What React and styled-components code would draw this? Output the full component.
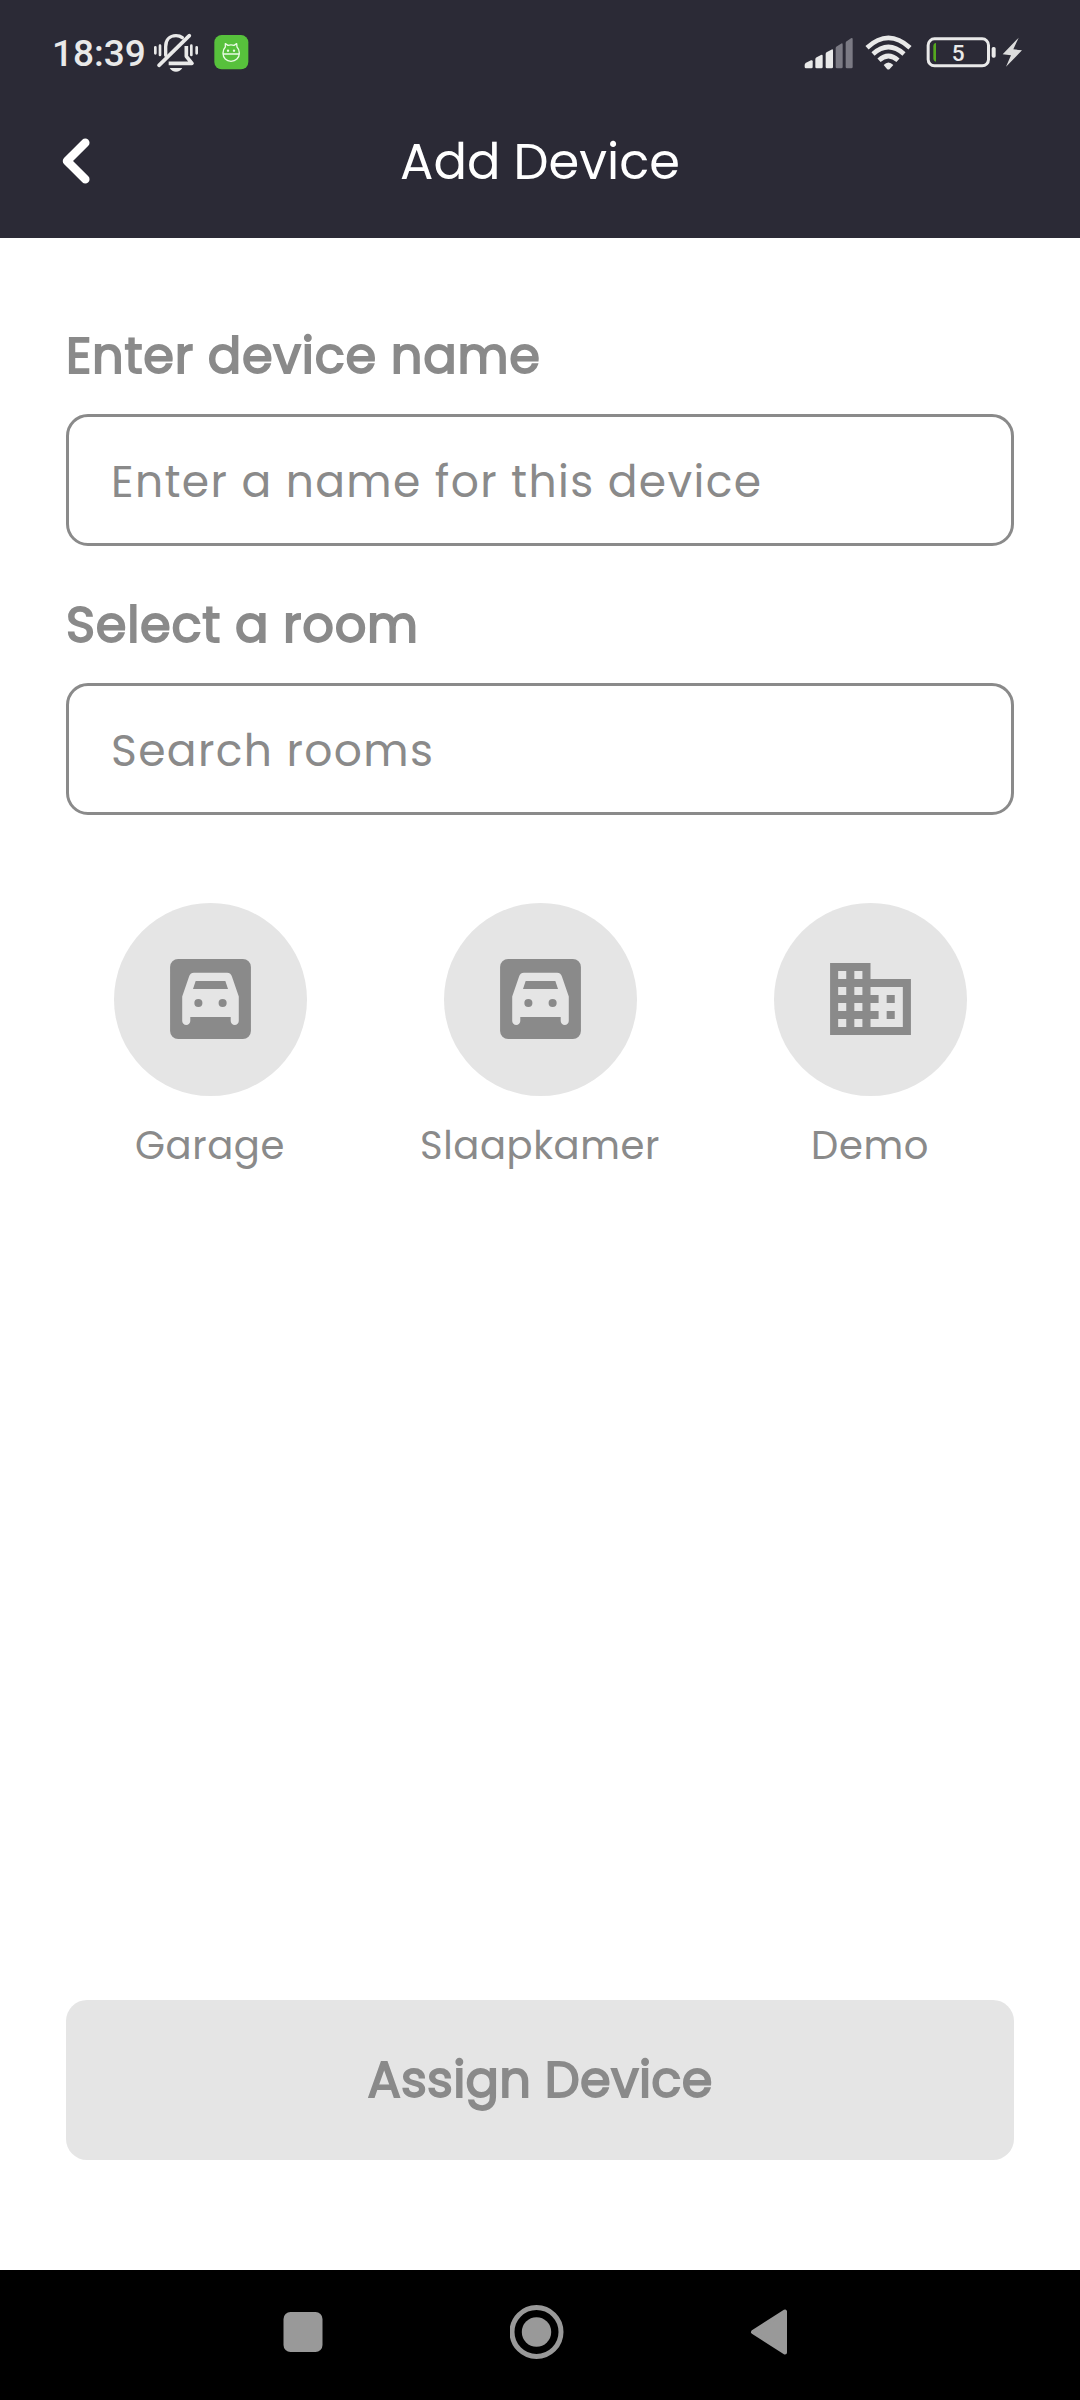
import React from "react";
import styled, { createGlobalStyle } from "styled-components";

const GlobalStyle = createGlobalStyle`
  *, *::before, *::after { box-sizing: border-box; }
  body { margin: 0; background: #fff; }
`;

const Screen = styled.div`
  display: flex;
  flex-direction: column;
  width: 1080px;
  height: 2400px;
  overflow: hidden;
  background: #fff;
  color: #8a8a8a;
  font-family: Poppins, Inter, "Open Sans", sans-serif;
  font-feature-settings: "cv11" 1;
`;

const StatusBar = styled.div`
  display: flex;
  align-items: flex-start;
  justify-content: space-between;
  height: 84px;
  padding: 32px 56px 0 52px;
  background: #2b2a36;
  color: #e9e9e9;
  font-family: Roboto, sans-serif;
`;

const StatusGroup = styled.div`
  display: flex;
  align-items: flex-start;
`;

const Clock = styled.span`
  width: 100px;
  font-size: 37px;
  font-weight: 500;
  line-height: 43px;
  white-space: nowrap;
`;

const AppBadge = styled.svg`
  margin-left: 14px;
`;

const StatusSymbols = styled.svg`
  margin-top: 3px;
`;

const AppBar = styled.header`
  display: grid;
  grid-template-columns: 120px 1fr 120px;
  align-items: center;
  height: 154px;
  background: #2b2a36;
  color: #fff;
`;

const BackButton = styled.button`
  display: flex;
  justify-self: start;
  padding: 0;
  margin-left: 60px;
  border: 0;
  background: none;
  color: inherit;
`;

const Title = styled.h1`
  margin: 0;
  padding-top: 1px;
  text-align: center;
  font-size: 49.5px;
  font-weight: 400;
  line-height: 60px;
`;

const Form = styled.main`
  display: flex;
  flex-direction: column;
  flex: 1;
  padding: 88px 66px 110px;
`;

const Label = styled.h2`
  margin: 0 0 28px;
  font-size: 49.5px;
  font-weight: 400;
  line-height: 60px;
  white-space: nowrap;
  letter-spacing: 0.72px;
  -webkit-text-stroke: 1.8px #8a8a8a;
`;

const Field = styled.div`
  display: flex;
  align-items: center;
  height: 132px;
  margin-bottom: 49px;
  padding: 4px 42px 0;
  border: 3px solid #8a8a8a;
  border-radius: 22px;
`;

const Placeholder = styled.span`
  font-size: 44px;
  line-height: 56px;
  white-space: nowrap;
  letter-spacing: 1.375px;
`;

const Rooms = styled.div`
  display: grid;
  grid-template-columns: repeat(3, 330px);
  justify-content: center;
  margin-top: 39px;
`;

const Room = styled.div`
  display: flex;
  flex-direction: column;
  align-items: center;
`;

const RoomIcon = styled.div`
  display: grid;
  justify-content: center;
  width: 193px;
  height: 193px;
  padding-top: 48px;
  border-radius: 50%;
  background: #e5e5e5;
`;

const RoomName = styled.span`
  margin-top: 25px;
  font-size: 38.5px;
  line-height: 50px;
  letter-spacing: 0.6px;
`;

const AssignButton = styled.button`
  display: flex;
  align-items: center;
  justify-content: center;
  height: 160px;
  margin-top: auto;
  padding: 0;
  border: 0;
  border-radius: 21px;
  background: #e5e5e5;
  color: #8a8a8a;
  font-family: inherit;
  font-feature-settings: inherit;
  font-size: 49.5px;
  font-weight: 400;
  line-height: 60px;
  letter-spacing: 0.25px;
  -webkit-text-stroke: 1.8px #8a8a8a;
`;

const NavBar = styled.nav`
  display: flex;
  align-items: center;
  justify-content: space-between;
  height: 130px;
  padding: 0 292px 6px 283px;
  background: #000;
`;

const BellMuted = () => (
  <svg width="48" height="42" viewBox="336 36 144 126" fill="none" stroke="#e9e9e9">
    <g strokeWidth="10" strokeLinecap="round">
      <path d="M346 82v18M360 77v28M454 77v28M470 82v18" strokeWidth="8" />
      <path d="M357 136L448 47" strokeWidth="11" />
      <path d="M377 106V80c0-20 12-33 31-33 8 0 14 2 19 6" />
    </g>
    <path d="M439 78v31l17 21h-70" strokeWidth="11" strokeLinejoin="round" />
    <path d="M389 144h38c-4 7-11 11-19 11s-15-4-19-11z" fill="#e9e9e9" stroke="none" />
  </svg>
);

const Badge = () => (
  <AppBadge width="35" height="38" viewBox="521 36 105 114" fill="none">
    <rect x="522" y="45" width="102" height="103" rx="22" fill="#57c13c" />
    <g stroke="#e9fbe4" strokeWidth="4" strokeLinejoin="round" strokeLinecap="round">
      <path d="M555 81c-5 5-7 11-7 18 0 15 10 25 24 25s25-10 25-25c0-7-2-13-7-18l-1-10-8 5c-6-2-12-2-18 0l-8-5z" />
      <path d="M549 102h47" />
    </g>
    <circle cx="563" cy="92" r="3.5" fill="#e9fbe4" />
    <circle cx="581" cy="92" r="3.5" fill="#e9fbe4" />
  </AppBadge>
);

const StatusIcons = () => (
  <StatusSymbols width="220" height="36" viewBox="43 44 660 108" fill="none">
    <g fill="#e9e9e9">
      <path d="M45 134q0-5 4-7l15-7q5-2 5 3v17q0 4-4 4H49q-4 0-4-4z" />
      <path d="M77 117q0-4 4-6l13-7q5-3 5 3v33q0 4-4 4H81q-4 0-4-4z" />
      <path d="M108 101q0-4 4-6l13-7q5-3 5 3v49q0 4-4 4h-14q-4 0-4-4z" />
    </g>
    <g fill="#7b7a84">
      <path d="M138 84q0-4 4-6l12-8q5-3 5 3v67q0 4-4 4h-13q-4 0-4-4z" />
      <path d="M168 68q0-4 4-6l12-8q5-3 5 3v83q0 4-4 4h-13q-4 0-4-4z" />
    </g>
    <g stroke="#e9e9e9" strokeWidth="14">
      <path d="M232 82q64-59 129 0" />
      <path d="M250 101q46-42 93 0" />
      <path d="M268 120q28-26 57 0" />
    </g>
    <path d="M282 134q14-15 29 0l-11 12q-4 3-8 0z" fill="#e9e9e9" />
    <rect x="415.5" y="55.5" width="181" height="81" rx="19" stroke="#e9e9e9" strokeWidth="9" />
    <rect x="606" y="80" width="12" height="32" rx="5" fill="#e9e9e9" />
    <path d="M439 68v56q-8-1-8-10V78q0-9 8-10z" fill="#55a81f" />
    <text x="505.5" y="123" textAnchor="middle" fill="#e9e9e9" fontFamily="Roboto, sans-serif" fontSize="68" fontWeight="500">5</text>
    <path d="M687 52l-48 50 25 3-15 34 48-49-26-3z" fill="#dcdcdc" />
  </StatusSymbols>
);

const ChevronBack = () => (
  <svg width="32" height="48" viewBox="0 0 32 48" fill="none" stroke="currentColor" strokeWidth="8.5" strokeLinecap="round" strokeLinejoin="round">
    <path d="M25.3 5.7L7 24l18.3 18.3" />
  </svg>
);

const GarageIcon = () => (
  <svg width="97" height="96" viewBox="0 0 24 24" preserveAspectRatio="none" fill="#8a8a8a" fillRule="evenodd">
    <path d="M4 2h16a2 2 0 0 1 2 2v16a2 2 0 0 1-2 2H4a2 2 0 0 1-2-2V4a2 2 0 0 1 2-2z M6.700 6.350L5 11.400V17.500c0 .55.450 1 1 1s1-.45 1-1v-1h10v1c0 .55.450 1 1 1s1-.45 1-1V11.400L17.300 6.350c-.18-.52-.55-.9-1.180-.9H7.880c-.63 0-1 .38-1.180.9z" />
    <path d="M8.330 7.500h7.340l.66 2H7.670z" />
    <circle cx="9" cy="13" r="1" />
    <circle cx="15" cy="13" r="1" />
  </svg>
);

const BuildingIcon = () => (
  <svg width="97" height="96" viewBox="0 0 24 24" preserveAspectRatio="none" fill="#8a8a8a">
    <path d="M12 7V3H2v18h20V7H12zM6 19H4v-2h2v2zm0-4H4v-2h2v2zm0-4H4V9h2v2zm0-4H4V5h2v2zm4 12H8v-2h2v2zm0-4H8v-2h2v2zm0-4H8V9h2v2zm0-4H8V5h2v2zm10 12h-8v-2h2v-2h-2v-2h2v-2h-2V9h8v10zm-2-8h-2v2h2v-2zm0 4h-2v2h2v-2z" />
  </svg>
);

const rooms = [
  { name: "Garage", Icon: GarageIcon },
  { name: "Slaapkamer", Icon: GarageIcon },
  { name: "Demo", Icon: BuildingIcon },
];

export default function App() {
  return (
    <Screen>
      <GlobalStyle />
      <StatusBar>
        <StatusGroup>
          <Clock>18:39</Clock>
          <BellMuted />
          <Badge />
        </StatusGroup>
        <StatusIcons />
      </StatusBar>
      <AppBar>
        <BackButton aria-label="Back">
          <ChevronBack />
        </BackButton>
        <Title>Add Device</Title>
      </AppBar>
      <Form>
        <Label>Enter device name</Label>
        <Field>
          <Placeholder>Enter a name for this device</Placeholder>
        </Field>
        <Label>Select a room</Label>
        <Field>
          <Placeholder>Search rooms</Placeholder>
        </Field>
        <Rooms>
          {rooms.map(({ name, Icon }) => (
            <Room key={name}>
              <RoomIcon>
                <Icon />
              </RoomIcon>
              <RoomName>{name}</RoomName>
            </Room>
          ))}
        </Rooms>
        <AssignButton>Assign Device</AssignButton>
      </Form>
      <NavBar>
        <svg width="40" height="40" viewBox="0 0 40 40">
          <rect x="0.5" y="0" width="39" height="40" rx="7" fill="#999" />
        </svg>
        <svg width="54" height="54" viewBox="0 0 54 54">
          <circle cx="26.5" cy="27" r="24.5" fill="none" stroke="#999" strokeWidth="5" />
          <circle cx="26.5" cy="27" r="14.7" fill="#999" />
        </svg>
        <svg width="38" height="46" viewBox="0 0 38 46">
          <path d="M3 23L35 2.5v41z" fill="#999" stroke="#999" strokeWidth="4" strokeLinejoin="round" />
        </svg>
      </NavBar>
    </Screen>
  );
}
